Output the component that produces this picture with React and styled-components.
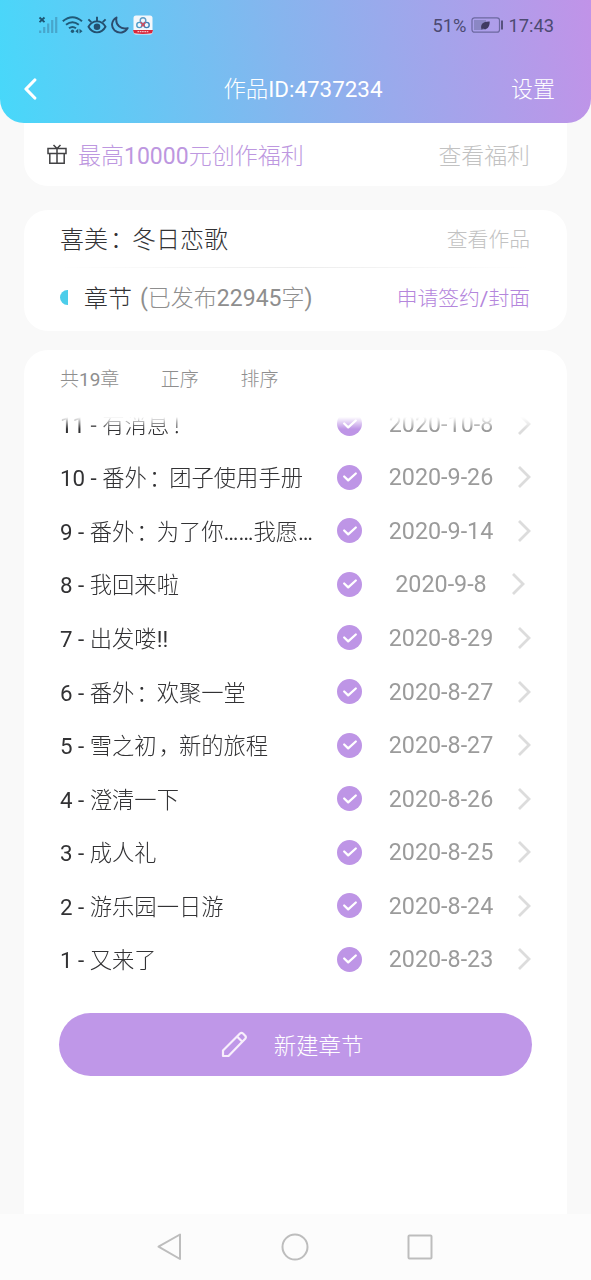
import React from "react";
import styled, { createGlobalStyle } from "styled-components";

const GlobalStyle = createGlobalStyle`
  * {
    box-sizing: border-box;
  }
  body {
    margin: 0;
    background: #f9f9f9;
    font-family: Roboto, "Noto Sans CJK SC Light", "Noto Sans CJK SC", sans-serif;
    color: #323234;
  }
`;

const Screen = styled.div`
  width: 591px;
  height: 1280px;
  display: flex;
  flex-direction: column;
  overflow: hidden;
  background: #f9f9f9;
`;

const Header = styled.header`
  height: 123px;
  flex: none;
  border-radius: 0 0 24px 24px;
  background: linear-gradient(82deg, #47d8fa 0%, #86b5ee 48%, #c193e8 100%);
`;

const StatusBar = styled.div`
  height: 50px;
  display: flex;
  align-items: center;
  justify-content: space-between;
  padding: 0 37px 0 38px;
  color: #4c4a72;
  font-size: 18.3px;
`;

const StatusGroup = styled.div`
  display: flex;
  align-items: center;
  gap: ${(props) => props.$gap}px;
`;

const TitleBar = styled.div`
  height: 77px;
  display: grid;
  grid-template-columns: 100px 1fr 100px;
  align-items: center;
  padding: 0 36px 0 22px;
  color: white;
  font-size: 22.4px;
`;

const BackButton = styled.div`
  display: flex;
  padding-left: 1px;
`;

const PageTitle = styled.div`
  text-align: center;
  padding: 0 0 3px 29px;
`;

const Settings = styled.div`
  text-align: right;
  padding-bottom: 3px;
  font-size: 22px;
`;

const Benefit = styled.div`
  height: 63px;
  flex: none;
  margin: 0 24px;
  padding: 0 37px 0 23px;
  display: flex;
  align-items: center;
  border-radius: 0 0 24px 24px;
  background: white;
  font-size: 23px;
`;

const BenefitText = styled.div`
  flex: 1;
  margin-left: 11px;
  padding-bottom: 2px;
  color: #bd97e0;
`;

const Hint = styled.div`
  color: #c2c2c2;
  padding-bottom: 2px;
  font-size: ${(props) => props.$size}px;
`;

const WorkCard = styled.div`
  height: 121px;
  flex: none;
  margin: 24px 24px 0;
  padding: 0 37px 0 36px;
  border-radius: 24px;
  background: white;
`;

const WorkRow = styled.div`
  height: ${(props) => props.$height}px;
  display: flex;
  align-items: center;
  font-size: 24px;
`;

const WorkTitle = styled.div`
  flex: 1;
  padding-bottom: 2px;
`;

const Divider = styled.div`
  height: 1px;
  background: linear-gradient(90deg, #fff, #ececec 50%, #fff);
`;

const HalfDot = styled.div`
  width: 8px;
  height: 15px;
  margin-right: 16px;
  border-radius: 8px 0 0 8px;
  background: #4ccdea;
`;

const SectionName = styled.div`
  padding-bottom: 1px;
`;

const WordCount = styled.div`
  flex: 1;
  margin-left: 8px;
  padding-bottom: 2px;
  font-size: 23px;
  color: #8e8e8e;
`;

const SignLink = styled.div`
  font-size: 20.8px;
  color: #b486dc;
`;

const ChapterCard = styled.div`
  height: 864px;
  flex: none;
  margin: 19px 24px 0;
  border-radius: 24px 24px 0 0;
  background: white;
`;

const Tabs = styled.div`
  height: 67px;
  display: flex;
  align-items: center;
  gap: 41.5px;
  padding: 0 36px 12px;
  font-size: 19px;
  color: #8e8e8e;
`;

const List = styled.div`
  height: 570px;
  overflow: hidden;
  mask-image: linear-gradient(transparent 0, #000 12px);
`;

const ListInner = styled.div`
  margin-top: -20px;
`;

const Row = styled.div`
  height: 53.55px;
  display: grid;
  grid-template-columns: 255px 22px 26px 1fr;
  align-items: center;
  padding: 0 10px 0 36px;
`;

const ChapterName = styled.div`
  overflow: hidden;
  white-space: nowrap;
  text-overflow: ellipsis;
  padding-bottom: 2px;
  font-size: 22.3px;
`;

/* full-width marks sit nearer to the middle of their cell */
const Mark = styled.span`
  margin: 0 -2px 0 2px;
`;

const Check = styled.div`
  grid-column: 3;
  width: 25px;
  height: 25px;
  display: flex;
  align-items: center;
  justify-content: center;
  border-radius: 50%;
  background: #be95e6;
`;

const DateBox = styled.div`
  display: flex;
  align-items: center;
  justify-content: center;
  gap: 24px;
  font-size: 23.3px;
  color: #9b9b9b;
`;

const NewChapter = styled.button`
  width: 473px;
  height: 63px;
  margin: 26px 35px 0;
  padding: 0 7px 0 0;
  display: flex;
  align-items: center;
  justify-content: center;
  gap: 26px;
  border: none;
  border-radius: 32px;
  background: #bf97e8;
  color: white;
  font-family: inherit;
  font-size: 22.4px;
`;

const ButtonText = styled.span`
  padding-bottom: 2px;
`;

const NavBar = styled.nav`
  height: 67px;
  flex: none;
  display: flex;
  align-items: center;
  justify-content: center;
  gap: 98px;
  padding: 0 1px 2px 0;
  background: #fcfcfc;
`;

const chapters = [
  { name: "11 - 有消息！", date: "2020-10-8" },
  { name: "10 - 番外：团子使用手册", date: "2020-9-26" },
  { name: "9 - 番外：为了你……我愿意等", date: "2020-9-14" },
  { name: "8 - 我回来啦", date: "2020-9-8" },
  { name: "7 - 出发喽!!", date: "2020-8-29" },
  { name: "6 - 番外：欢聚一堂", date: "2020-8-27" },
  { name: "5 - 雪之初，新的旅程", date: "2020-8-27" },
  { name: "4 - 澄清一下", date: "2020-8-26" },
  { name: "3 - 成人礼", date: "2020-8-25" },
  { name: "2 - 游乐园一日游", date: "2020-8-24" },
  { name: "1 - 又来了", date: "2020-8-23" },
];

const withMarks = (text) =>
  text.split(/([：，！])/).map((part, index) => {
    return index % 2 ? <Mark key={index}>{part}</Mark> : part;
  });

const SignalIcon = () => (
  <svg width="20" height="18" viewBox="0 0 20 18" fill="none">
    <path d="M1.500 1.500l5 4.600M6.500 1.500l-5 4.600" stroke="#1d5673" strokeWidth="1.900" />
    <path d="M2.200 14.500V17M6.200 11v6M10.200 7.500V17M14.200 4v13M18.200 1v16" stroke="#48a6cb" strokeWidth="2.200" />
  </svg>
);

const WifiIcon = () => (
  <svg width="21" height="18" viewBox="0 0 21 18" fill="none" stroke="#205a78" strokeWidth="2">
    <path d="M.8 5.300Q10.500-2.700 20 5.300M4 8.800q6.500-5 12.800 0M7 12.200q3.500-2.600 7 0" />
    <circle cx="10.500" cy="15.300" r="1.700" fill="#205a78" stroke="none" />
    <path d="M16.300 12.800v4.800l-3-2.400zM17.500 12.800v4.800l3-2.400z" fill="#205a78" stroke="none" />
  </svg>
);

const EyeIcon = () => (
  <svg width="20" height="18" viewBox="0 0 20 18" fill="none" stroke="#24506f" strokeWidth="1.900">
    <path d="M1.500 10.800C5.500 3.500 14.500 3.500 18.500 10.800 14.500 18.200 5.500 18.200 1.500 10.800z" />
    <path d="M10 5V.8M4.300 6.200L1.400 3.300M15.700 6.200l2.900-2.900" />
    <circle cx="10" cy="10.800" r="3.300" fill="#24506f" stroke="none" />
  </svg>
);

const MoonIcon = () => (
  <svg width="18" height="18" viewBox="0 0 18 18" fill="none" stroke="#2c4b6d" strokeWidth="1.900" strokeLinejoin="round">
    <path d="M5.500 1.500C.2 4.500-.3 11 3.700 14.600c4.300 3.500 10.400 2.300 13-2.500C10 14 4 9 5.500 1.500z" />
  </svg>
);

const NetdiskIcon = () => (
  <svg width="20" height="20" viewBox="0 0 20 20" fill="none">
    <rect x=".5" y=".5" width="19" height="19" rx="2.500" fill="#f4f7fb" />
    <circle cx="6.400" cy="10" r="2.600" stroke="#4a9ac8" strokeWidth="1.400" />
    <circle cx="13.600" cy="10" r="2.600" stroke="#3a7fb8" strokeWidth="1.400" />
    <circle cx="10" cy="5.600" r="2.800" stroke="#5c9cc8" strokeWidth="1.400" />
    <path d="M7.600 7.200l2.400 2.200 2.400-2.200M8.400 11.600L10 9.400l1.600 2.200" stroke="#dd4454" strokeWidth="1.200" />
    <path d="M0 15h20l-1 3.200q-9 1.500-18 0z" fill="#d8283c" />
    <path d="M4.500 16.600h11" stroke="#f3c3c9" strokeWidth="1.300" strokeDasharray="1.600 .7" />
  </svg>
);

const BatteryIcon = () => (
  <svg width="33" height="16" viewBox="0 0 33 16" fill="none">
    <rect x="1" y=".8" width="27.500" height="14.400" rx="2.500" stroke="#6c68a0" strokeWidth="1.200" />
    <rect x="3" y="3" width="12" height="10" fill="#8b87c4" />
    <path d="M10.500 12.200c-1.500-5 1.800-8 8.200-7.700.1 6-3 8.800-6.800 7l-1 1.300z" fill="#3f3b61" />
    <path d="M31 3.500v9" stroke="#57527f" strokeWidth="2" />
  </svg>
);

const BackIcon = () => (
  <svg width="16" height="22" viewBox="0 0 16 22" fill="none" stroke="#fff" strokeWidth="3.200" strokeLinecap="round" strokeLinejoin="round">
    <path d="M11.800 2L3 11l8.800 9" />
  </svg>
);

const GiftIcon = () => (
  <svg width="20" height="21" viewBox="0 0 20 21" fill="none" stroke="#424244" strokeWidth="1.500">
    <path d="M1 4.500h18v5H1zM2.800 9.500v9.700h14.400V9.500M10 4.500v14.700M6.500 1L10 4.500 13.500 1" />
  </svg>
);

const CheckIcon = () => (
  <svg width="16" height="12" viewBox="0 0 16 12" fill="none" stroke="#fff" strokeWidth="2.300" strokeLinecap="round" strokeLinejoin="round">
    <path d="M2.200 5.500l4 3.800 7.600-6.800" />
  </svg>
);

const ArrowIcon = () => (
  <svg width="14" height="24" viewBox="0 0 14 24" fill="none" stroke="#dcdcdc" strokeWidth="2.800">
    <path d="M2 2l10 10L2 22" />
  </svg>
);

const PencilIcon = () => (
  <svg width="27" height="27" viewBox="0 0 27 27" fill="none" stroke="#f8effc" strokeWidth="2.200" strokeLinejoin="round">
    <path d="M2 25v-5.500L19 2.500q1.500-1.300 3 0l2.200 2.200q1.300 1.500 0 3L7.500 25zM16 5.500l5.300 5.300" />
  </svg>
);

const NavBack = () => (
  <svg width="26" height="30" viewBox="0 0 26 30" fill="none" stroke="#bdbdbd" strokeWidth="2" strokeLinejoin="round">
    <path d="M23 2.500V27L1.500 14.700z" />
  </svg>
);

const NavHome = () => (
  <svg width="28" height="28" viewBox="0 0 28 28" fill="none" stroke="#bdbdbd" strokeWidth="2">
    <circle cx="14" cy="14" r="12.500" />
  </svg>
);

const NavRecent = () => (
  <svg width="26" height="26" viewBox="0 0 26 26" fill="none" stroke="#bdbdbd" strokeWidth="2">
    <rect x="1.500" y="1.500" width="23" height="23" rx="1" />
  </svg>
);

class App extends React.Component {
  render() {
    const chapterRows = chapters.map((chapter, index) => {
      return (
        <Row key={index}>
          <ChapterName>{withMarks(chapter.name)}</ChapterName>
          <Check>
            <CheckIcon />
          </Check>
          <DateBox>
            {chapter.date}
            <ArrowIcon />
          </DateBox>
        </Row>
      );
    });

    return (
      <Screen>
        <GlobalStyle />
        <Header>
          <StatusBar>
            <StatusGroup $gap={4}>
              <SignalIcon />
              <WifiIcon />
              <EyeIcon />
              <MoonIcon />
              <NetdiskIcon />
            </StatusGroup>
            <StatusGroup $gap={4.5}>
              <span>51%</span>
              <BatteryIcon />
              <span>17:43</span>
            </StatusGroup>
          </StatusBar>
          <TitleBar>
            <BackButton>
              <BackIcon />
            </BackButton>
            <PageTitle>作品ID:4737234</PageTitle>
            <Settings>设置</Settings>
          </TitleBar>
        </Header>
        <Benefit>
          <GiftIcon />
          <BenefitText>最高10000元创作福利</BenefitText>
          <Hint $size={22.9}>查看福利</Hint>
        </Benefit>
        <WorkCard>
          <WorkRow $height={57}>
            <WorkTitle>{withMarks("喜美：冬日恋歌")}</WorkTitle>
            <Hint $size={20.8}>查看作品</Hint>
          </WorkRow>
          <Divider />
          <WorkRow $height={58}>
            <HalfDot />
            <SectionName>章节</SectionName>
            <WordCount>(已发布22945字)</WordCount>
            <SignLink>申请签约/封面</SignLink>
          </WorkRow>
        </WorkCard>
        <ChapterCard>
          <Tabs>
            <div>共19章</div>
            <div>正序</div>
            <div>排序</div>
          </Tabs>
          <List>
            <ListInner>{chapterRows}</ListInner>
          </List>
          <NewChapter>
            <PencilIcon />
            <ButtonText>新建章节</ButtonText>
          </NewChapter>
        </ChapterCard>
        <NavBar>
          <NavBack />
          <NavHome />
          <NavRecent />
        </NavBar>
      </Screen>
    );
  }
}

export default App;
